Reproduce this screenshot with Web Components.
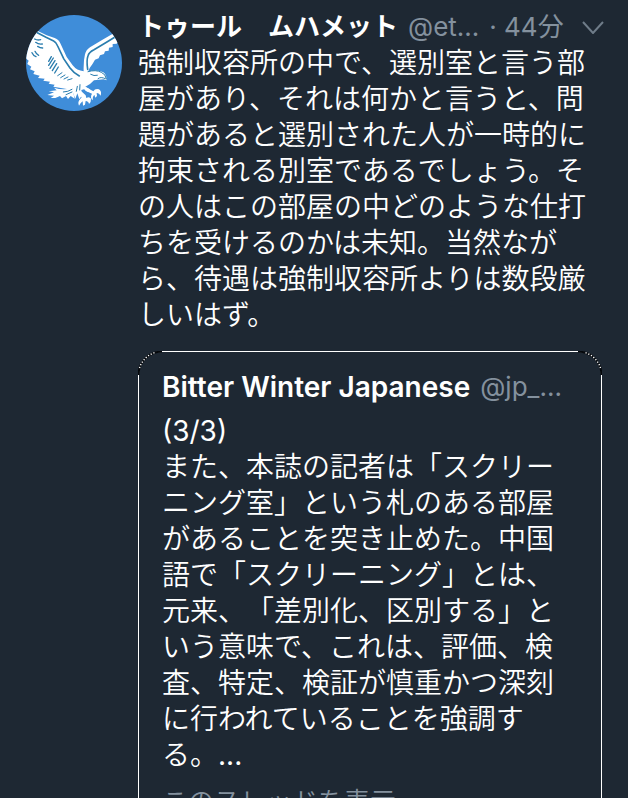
<!DOCTYPE html>
<html lang="ja">
<head>
<meta charset="utf-8">
<meta name="viewport" content="width=device-width, initial-scale=1">
<title>ツイート</title>
<style>
  html, body {
    margin: 0;
    height: 100%;
    overflow: hidden;
  }
  body {
    background: #1e2833;
    color: #fff;
    font-family: Inter, "Noto Sans CJK JP", sans-serif;
    font-size: 28px;
    font-weight: 350;
    line-height: 36px;
    text-spacing-trim: space-all;
    --muted: #84919e;
  }
  quote-card {
    --name-size: 28px;
  }
  .latin {
    font-weight: 400;
  }
</style>
</head>
<body>
  <tweet-post>
    <eagle-avatar slot="avatar"></eagle-avatar>
    <user-line slot="header" name="トゥール　ムハメット" handle="@et..." time="44分"></user-line>
    強制収容所の中で、選別室と言う部屋があり、それは何かと言うと、問題があると選別された人が一時的に拘束される別室であるでしょう。その人はこの部屋の中どのような仕打ちを受けるのかは未知。当然ながら、待遇は強制収容所よりは数段厳しいはず。
    <quote-card slot="quote">
      <user-line slot="header" name="Bitter Winter Japanese" handle="@jp_..."></user-line>
      <span class="latin">(3/3)</span><br>また、本誌の記者は「スクリーニング室」という札のある部屋があることを突き止めた。中国語で「スクリーニング」とは、元来、「差別化、区別する」という意味で、これは、評価、検査、特定、検証が慎重かつ深刻に行われていることを強調する。<span class="latin">...</span>
      <a slot="more" href="#">このスレッドを表示</a>
    </quote-card>
  </tweet-post>

<script>
class TweetPost extends HTMLElement {
  connectedCallback() {
    this.attachShadow({ mode: 'open' });
    this.shadowRoot.innerHTML = `
      <style>
        :host {
          display: block;
          padding: 9px 26px 0;
        }
        article {
          display: grid;
          grid-template-columns: 96px minmax(0, 1fr);
          column-gap: 16px;
        }
        .avatar {
          padding-top: 6px;
        }
        .quote {
          margin-top: 18px;
        }
      </style>
      <article>
        <div class="avatar"><slot name="avatar"></slot></div>
        <div class="content">
          <slot name="header"></slot>
          <div class="text"><slot></slot></div>
          <div class="quote"><slot name="quote"></slot></div>
        </div>
      </article>
    `;
  }
}

class UserLine extends HTMLElement {
  connectedCallback() {
    const name = this.getAttribute('name');
    const handle = this.getAttribute('handle');
    const time = this.getAttribute('time');

    this.attachShadow({ mode: 'open' });
    this.shadowRoot.innerHTML = `
      <style>
        :host {
          display: flex;
          align-items: center;
          font-size: 26px;
          white-space: nowrap;
        }
        .name {
          font-size: var(--name-size, 26px);
          font-weight: 600;
        }
        .meta {
          display: flex;
          gap: 10px;
          margin-left: 10px;
          color: var(--muted);
          font-weight: 400;
        }
        button {
          display: flex;
          margin: 0 -2px 0 auto;
          padding: 0;
          border: 0;
          background: none;
          color: #6f7c89;
          cursor: pointer;
        }
      </style>
      <span class="name">${name}</span>
      <span class="meta"><span>${handle}</span>${time ? `<span>· ${time}</span>` : ''}</span>
      ${time ? `
        <button type="button" aria-label="メニュー">
          <svg width="22" height="14" viewBox="0 0 22 14" fill="none" stroke="currentColor" stroke-width="2">
            <path d="M1 2L11 13L21 2"/>
          </svg>
        </button>` : ''}
    `;
  }
}

class QuoteCard extends HTMLElement {
  connectedCallback() {
    this.attachShadow({ mode: 'open' });
    this.shadowRoot.innerHTML = `
      <style>
        :host {
          display: block;
          position: relative;
          padding: 17px 23px;
          border: 1px solid #fff;
          border-radius: 24px;
        }
        .text {
          margin-top: 8px;
        }
        .more {
          margin-top: 10px;
        }
        ::slotted(a) {
          color: var(--muted);
          font-size: 26px;
          text-decoration: none;
        }
        .corner {
          position: absolute;
          top: -1px;
          left: -1px;
        }
        .corner.right {
          left: auto;
          right: -1px;
          transform: scaleX(-1);
        }
      </style>
      ${this.corner('left')}
      ${this.corner('right')}
      <slot name="header"></slot>
      <div class="text"><slot></slot></div>
      <div class="more"><slot name="more"></slot></div>
    `;
  }

  // dark arc with small white dots over the rounded border
  corner(side) {
    return `
      <svg class="corner ${side}" width="24" height="24" viewBox="0 0 24 24" fill="none">
        <path d="M.5 24A23.5 23.5 0 0 1 24 .5" stroke="#05080c" stroke-width="2"/>
        <path d="M1.5 17A23.5 23.5 0 0 1 17 1.5" stroke="#fff" stroke-width="1.4" stroke-dasharray="1.2 1.8"/>
      </svg>`;
  }
}

class EagleAvatar extends HTMLElement {
  connectedCallback() {
    this.attachShadow({ mode: 'open' });
    this.shadowRoot.innerHTML = `
      <style>
        :host {
          display: block;
        }
        svg {
          display: block;
          width: 100%;
          border-radius: 50%;
        }
      </style>
      <svg viewBox="30 21 288 288" role="img" aria-label="eagle">
        <rect x="30" y="21" width="288" height="288" fill="#3f8dd9"/>
        <g fill="#fff">
          <!-- left wing and body -->
          <path d="M28 60L64 68L92 82L116 90Q129 95 134 108L152 147L170 172Q182 188 203 190Q202 158 207 139Q210 126 222 118L262 94L310 66L320 100Q304 101 302 107L290 108L290 117L279 119L278 128L267 130L264 138L252 142L248 151L237 155L230 167L221 180L217 190Q246 184 262 193Q273 201 271 217L263 214Q248 216 234 217L222 228L208 236L222 244L216 252L204 244L196 246L198 262L190 274L184 256L178 272L170 252L152 243L130 239L112 236L116 230L98 227L102 221L82 218L86 212L66 210L71 203L52 198L56 190L42 184L46 176L34 168L38 158L28 150Z"/>
          <!-- tail -->
          <path d="M170 247L176 272L164 264L156 273L150 264L138 271L132 264L118 270L104 270L114 263L94 261L114 253L98 250L122 247L114 239Q142 248 170 240Z"/>
          <!-- talons -->
          <path d="M196 250L209 262L211 270Q220 264 225 272Q226 282 219 288Q218 280 209 279L207 290L201 293L200 280Q194 284 189 293Q184 282 192 274L197 268L188 258Z"/>
          <path d="M210 238L232 250Q238 240 249 244Q258 250 254 263Q249 254 242 255L243 264L238 269L235 260Q229 265 230 277Q221 268 228 257L208 248Z"/>
        </g>
        <g fill="none" stroke="#2a7dae" stroke-linecap="round">
          <path d="M64 74L90 88L113 99Q121 103 125 114L143 152L162 180Q174 196 190 204" stroke-width="5"/>
          <path d="M215 184Q211 157 216 143Q219 132 234 125L274 101L302 84" stroke-width="5"/>
          <path d="M56 93Q64 98 74 95M59 103Q68 110 79 108M65 115Q72 120 80 120M48 134Q52 143 60 146M57 130Q61 139 68 142" stroke-width="4"/>
          <path d="M98 160L106 146M98 172L112 150M102 181L117 158M109 188L122 167M116 195L127 177" stroke-width="4"/>
          <path d="M125 203L138 194M134 209L147 201M144 213L156 207M155 216L168 212" stroke-width="3"/>
          <path d="M216 191Q240 184 256 193Q269 198 271 212M224 199Q234 205 244 202M246 212Q254 205 268 212M184 235L181 250M192 230L191 246M142 252Q156 252 168 244M150 260L168 252" stroke-width="3"/>
        </g>
      </svg>
    `;
  }
}

customElements.define('tweet-post', TweetPost);
customElements.define('user-line', UserLine);
customElements.define('quote-card', QuoteCard);
customElements.define('eagle-avatar', EagleAvatar);
</script>
</body>
</html>
